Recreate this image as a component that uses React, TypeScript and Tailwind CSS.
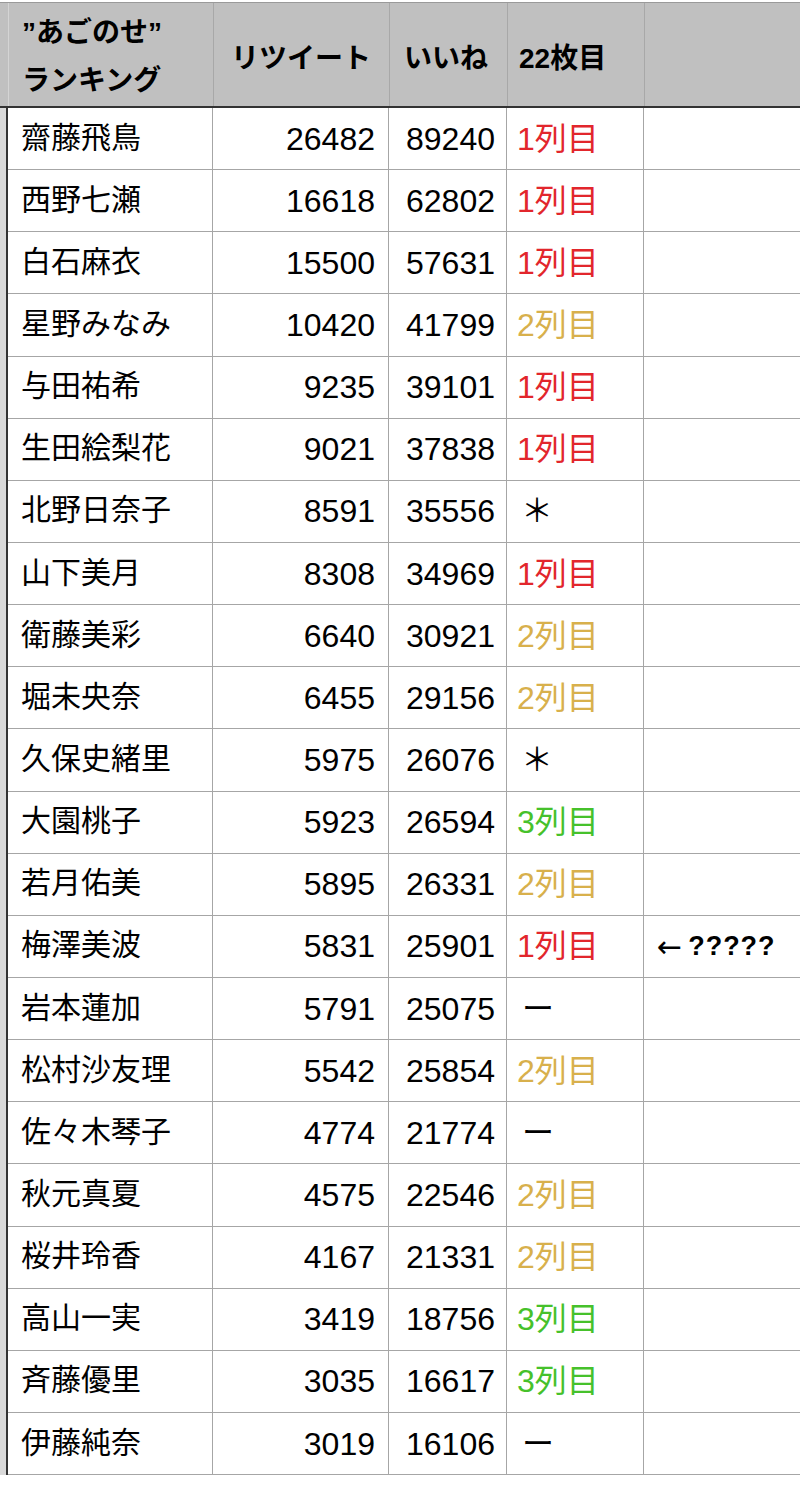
type Mark = "1" | "2" | "3" | "*" | "-";

type Row = { name: string; rt: number; like: number; mark: Mark; note?: boolean };

const rows: Row[] = [
  { name: "齋藤飛鳥", rt: 26482, like: 89240, mark: "1" },
  { name: "西野七瀬", rt: 16618, like: 62802, mark: "1" },
  { name: "白石麻衣", rt: 15500, like: 57631, mark: "1" },
  { name: "星野みなみ", rt: 10420, like: 41799, mark: "2" },
  { name: "与田祐希", rt: 9235, like: 39101, mark: "1" },
  { name: "生田絵梨花", rt: 9021, like: 37838, mark: "1" },
  { name: "北野日奈子", rt: 8591, like: 35556, mark: "*" },
  { name: "山下美月", rt: 8308, like: 34969, mark: "1" },
  { name: "衛藤美彩", rt: 6640, like: 30921, mark: "2" },
  { name: "堀未央奈", rt: 6455, like: 29156, mark: "2" },
  { name: "久保史緒里", rt: 5975, like: 26076, mark: "*" },
  { name: "大園桃子", rt: 5923, like: 26594, mark: "3" },
  { name: "若月佑美", rt: 5895, like: 26331, mark: "2" },
  { name: "梅澤美波", rt: 5831, like: 25901, mark: "1", note: true },
  { name: "岩本蓮加", rt: 5791, like: 25075, mark: "-" },
  { name: "松村沙友理", rt: 5542, like: 25854, mark: "2" },
  { name: "佐々木琴子", rt: 4774, like: 21774, mark: "-" },
  { name: "秋元真夏", rt: 4575, like: 22546, mark: "2" },
  { name: "桜井玲香", rt: 4167, like: 21331, mark: "2" },
  { name: "高山一実", rt: 3419, like: 18756, mark: "3" },
  { name: "斉藤優里", rt: 3035, like: 16617, mark: "3" },
  { name: "伊藤純奈", rt: 3019, like: 16106, mark: "-" },
];

function MarkCell({ mark }: { mark: Mark }) {
  if (mark === "*") return <span className="text-black pl-[4px]">＊</span>;
  if (mark === "-") return <span className="text-black pl-[5px]">ー</span>;
  const color =
    mark === "1" ? "text-[#e2262c]" : mark === "2" ? "text-[#d8b04c]" : "text-[#46c12b]";
  return <span className={`${color} text-[32px]`}>{mark}列目</span>;
}

export default function App() {
  return (
    <div
      className="w-[800px] min-h-[1486px] bg-white pt-[2px] text-black text-[32px]"
      style={{ fontFamily: '"Liberation Sans", "Noto Sans CJK JP", sans-serif' }}
    >
      {/* header */}
      <div className="flex h-[106px] bg-[#c0c0c0] border-t border-[#9a9a9a] border-b-2 border-b-[#333] font-bold text-[28px]">
        <div className="w-[9px] border-r border-[#d4d4d4]" />
        <div className="w-[205px] border-r border-[#a8a8a8] pl-[13px] pt-[4px] flex flex-col justify-center leading-[48px]">
          <span>”あごのせ”</span>
          <span>ランキング</span>
        </div>
        <div className="w-[176px] border-r border-[#a8a8a8] pl-[17px] pt-[8px] flex items-center">リツイート</div>
        <div className="w-[118px] border-r border-[#a8a8a8] pl-[14px] pt-[8px] flex items-center">いいね</div>
        <div className="w-[137px] border-r border-[#a8a8a8] pl-[11px] pt-[8px] flex items-center">22枚目</div>
        <div className="flex-1" />
      </div>

      {/* body */}
      {rows.map((r) => (
        <div key={r.name} className="flex h-[62.15px]">
          <div className="w-[8px] bg-[#d9d9d9] border-r-2 border-[#333] shrink-0" />
          <div className="flex flex-1 border-b border-[#a6a6a6]">
            <div className="w-[205px] border-r border-[#a6a6a6] pl-[13px] flex items-center pb-[3px] text-[30px]">
              {r.name}
            </div>
            <div className="w-[176px] border-r border-[#a6a6a6] pr-[13px] flex items-center justify-end">
              {r.rt}
            </div>
            <div className="w-[118px] border-r border-[#a6a6a6] pr-[11px] flex items-center justify-end">
              {r.like}
            </div>
            <div className="w-[137px] border-r border-[#a6a6a6] pl-[10px] flex items-center">
              <MarkCell mark={r.mark} />
            </div>
            <div className="flex-1 pl-[13px] flex items-center font-bold text-[27px]">
              {r.note && (
                <>
                  <span className="text-[30px] font-normal" style={{ fontFamily: '"DejaVu Sans", sans-serif' }}>←</span>
                  <span className="ml-[6px] tracking-[1px]">?????</span>
                </>
              )}
            </div>
          </div>
        </div>
      ))}
    </div>
  );
}
